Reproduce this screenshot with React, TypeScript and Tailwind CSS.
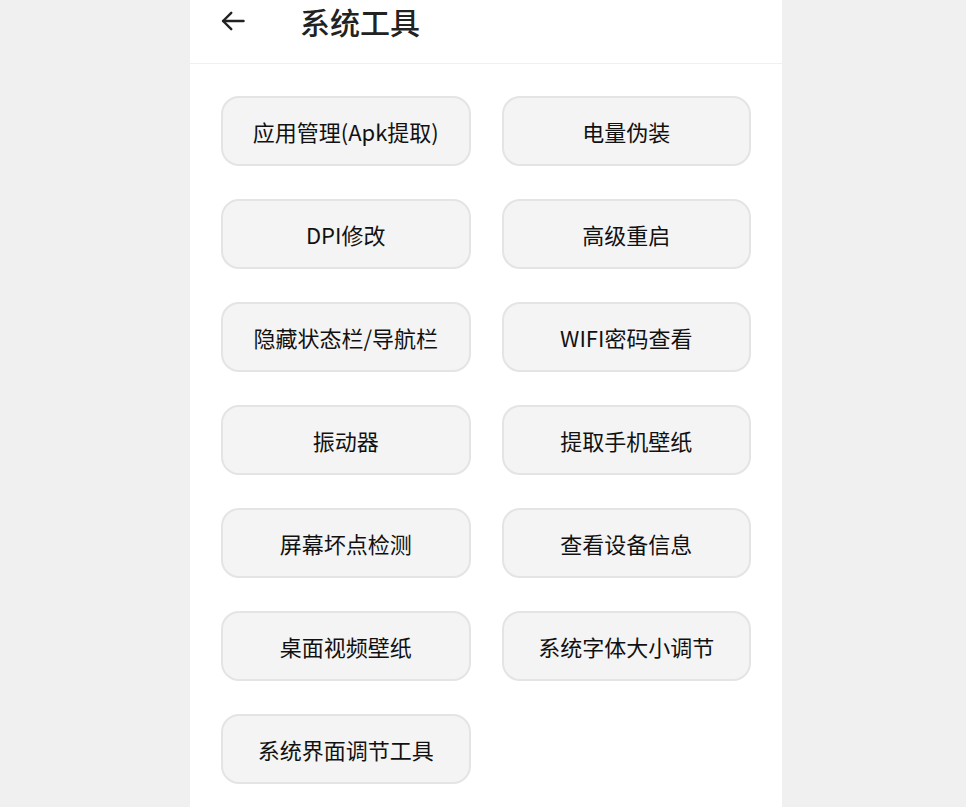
const tools = [
  "应用管理(Apk提取)",
  "电量伪装",
  "DPI修改",
  "高级重启",
  "隐藏状态栏/导航栏",
  "WIFI密码查看",
  "振动器",
  "提取手机壁纸",
  "屏幕坏点检测",
  "查看设备信息",
  "桌面视频壁纸",
  "系统字体大小调节",
  "系统界面调节工具",
];

export default function App() {
  return (
    <div
      className="h-[807px] overflow-hidden bg-[#f0f0f0] pl-[190px]"
      style={{ fontFamily: '"Noto Sans CJK SC", "Noto Sans", sans-serif' }}
    >
      <div className="h-full w-[592px] bg-white">
        {/* header */}
        <div className="flex h-[64px] items-center border-b border-[#f0f0f0] pb-[21px] pl-[29px]">
          <svg width="28" height="28" viewBox="0 0 24 24" fill="none" stroke="#222" strokeWidth="2.1" strokeLinecap="round" strokeLinejoin="round">
            <path d="M21 12H3.5" />
            <path d="M10.5 5l-7 7 7 7" />
          </svg>
          <h1 className="ml-[53px] text-[30px] font-medium leading-none text-[#222]">系统工具</h1>
        </div>

        {/* body */}
        <div className="grid grid-cols-2 gap-x-[31px] gap-y-[33px] px-[31px] pt-[32px]">
          {tools.map((t) => (
            <div
              key={t}
              className="flex h-[70px] items-center justify-center rounded-[18px] border-2 border-[#e4e4e4] bg-[#f4f4f4] text-[22px] text-[#111]"
            >
              {t}
            </div>
          ))}
        </div>
      </div>
    </div>
  );
}
